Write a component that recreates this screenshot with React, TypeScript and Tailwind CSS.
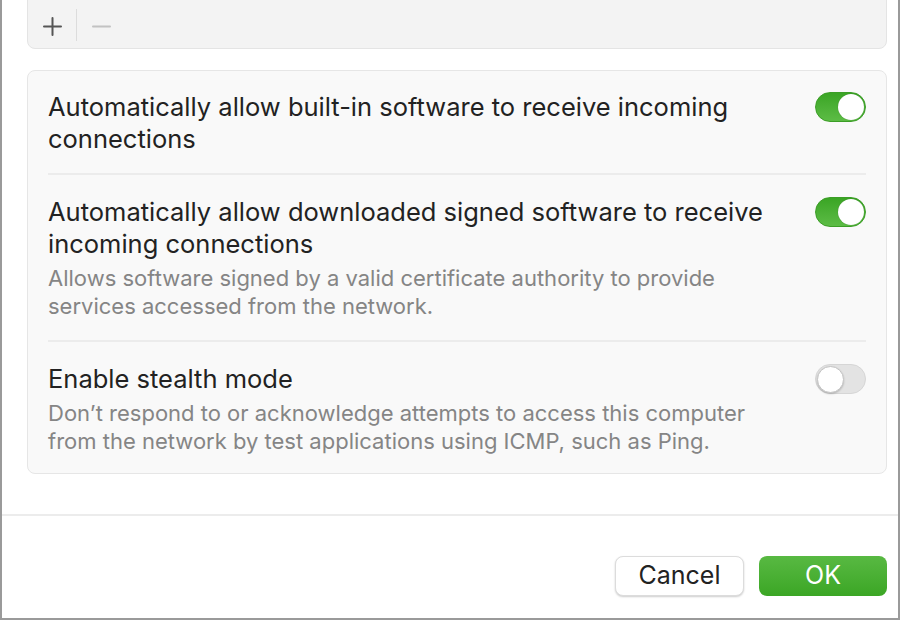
import React from "react";

type Row = {
  title: string;
  desc?: string;
  on: boolean;
};

const rows: Row[] = [
  {
    title: "Automatically allow built-in software to receive incoming connections",
    on: true,
  },
  {
    title:
      "Automatically allow downloaded signed software to receive incoming connections",
    desc: "Allows software signed by a valid certificate authority to provide services accessed from the network.",
    on: true,
  },
  {
    title: "Enable stealth mode",
    desc: "Don\u2019t respond to or acknowledge attempts to access this computer from the network by test applications using ICMP, such as Ping.",
    on: false,
  },
];

// padding per row, written out in full
const rowPad = [
  "pt-[20px] pb-[18px] border-b-2 border-[#ececec]",
  "pt-[21px] pb-[20px] border-b-2 border-[#ececec]",
  "pt-[21px] pb-[18px]",
];

const Toggle = ({ on }: { on: boolean }) =>
  on ? (
    <div className="flex h-[30px] w-[51px] shrink-0 items-center justify-end rounded-full border border-[#3c9e27] bg-gradient-to-b from-[#3aa524] to-[#5cbc45] pr-[1px]">
      <div className="h-[26px] w-[26px] rounded-full bg-white shadow-[0_0_1px_rgba(0,0,0,0.3)]" />
    </div>
  ) : (
    <div className="flex h-[30px] w-[51px] shrink-0 items-center justify-start rounded-full border border-[#d6d6d6] bg-[#e3e3e3] pl-[1px]">
      <div className="h-[27px] w-[27px] rounded-full border border-[#c4c4c4] bg-white shadow-[0_1px_2px_rgba(0,0,0,0.2)]" />
    </div>
  );

export default function App() {
  return (
    <div
      className="flex h-[620px] w-[900px] flex-col border-x-2 border-b-2 border-[#9a9a9a] bg-white"
      style={{ fontFamily: "Inter, 'Noto Sans', sans-serif" }}
    >
      <div className="pl-[25px] pr-[11px]">
        <div className="mt-[-10px] flex h-[59px] items-center rounded-b-lg border border-[#e4e4e4] bg-[#f3f3f3] pt-[10px]">
          <span className="ml-[14px] mt-[3px] flex w-[20px] items-center justify-center">
            <svg width="19" height="19" viewBox="0 0 19 19">
              <path d="M9.5 1v17M1 9.5h17" stroke="#555" strokeWidth="2" strokeLinecap="round" />
            </svg>
          </span>
          <span className="mx-[14px] h-[32px] w-px bg-[#dcdcdc]" />
          <span className="mt-[3px] flex w-[20px] items-center justify-center">
            <svg width="19" height="19" viewBox="0 0 19 19">
              <path d="M1 9.5h17" stroke="#c2c2c2" strokeWidth="2" strokeLinecap="round" />
            </svg>
          </span>
        </div>

        <div className="mt-[21px] rounded-lg border border-[#e6e6e6] bg-[#f9f9f9] px-[20px]">
          {rows.map((r, i) => (
            <div
              key={i}
              className={"flex items-start justify-between gap-8 " + rowPad[i]}
            >
              <div className="max-w-[730px]">
                <div className="text-[25.5px] leading-[32px] text-[#222222]">
                  {r.title}
                </div>
                {r.desc && (
                  <div className="mt-[4px] text-[22px] leading-[28px] text-[#858585]">
                    {r.desc}
                  </div>
                )}
              </div>
              <div className="pt-[1px]">
                <Toggle on={r.on} />
              </div>
            </div>
          ))}
        </div>
      </div>

      <div className="mt-[40px] border-t-2 border-[#ececec]" />

      <div className="flex flex-1 items-end justify-end gap-[15px] px-[11px] pb-[22px]">
        <button className="h-[40px] w-[129px] rounded-lg border border-[#dcdcdc] bg-white text-[25px] text-[#222] shadow-[0_1px_2px_rgba(0,0,0,0.2)]">
          Cancel
        </button>
        <button className="h-[40px] w-[128px] rounded-lg bg-gradient-to-b from-[#58b942] to-[#3ba624] text-[25px] text-white">
          OK
        </button>
      </div>
    </div>
  );
}
